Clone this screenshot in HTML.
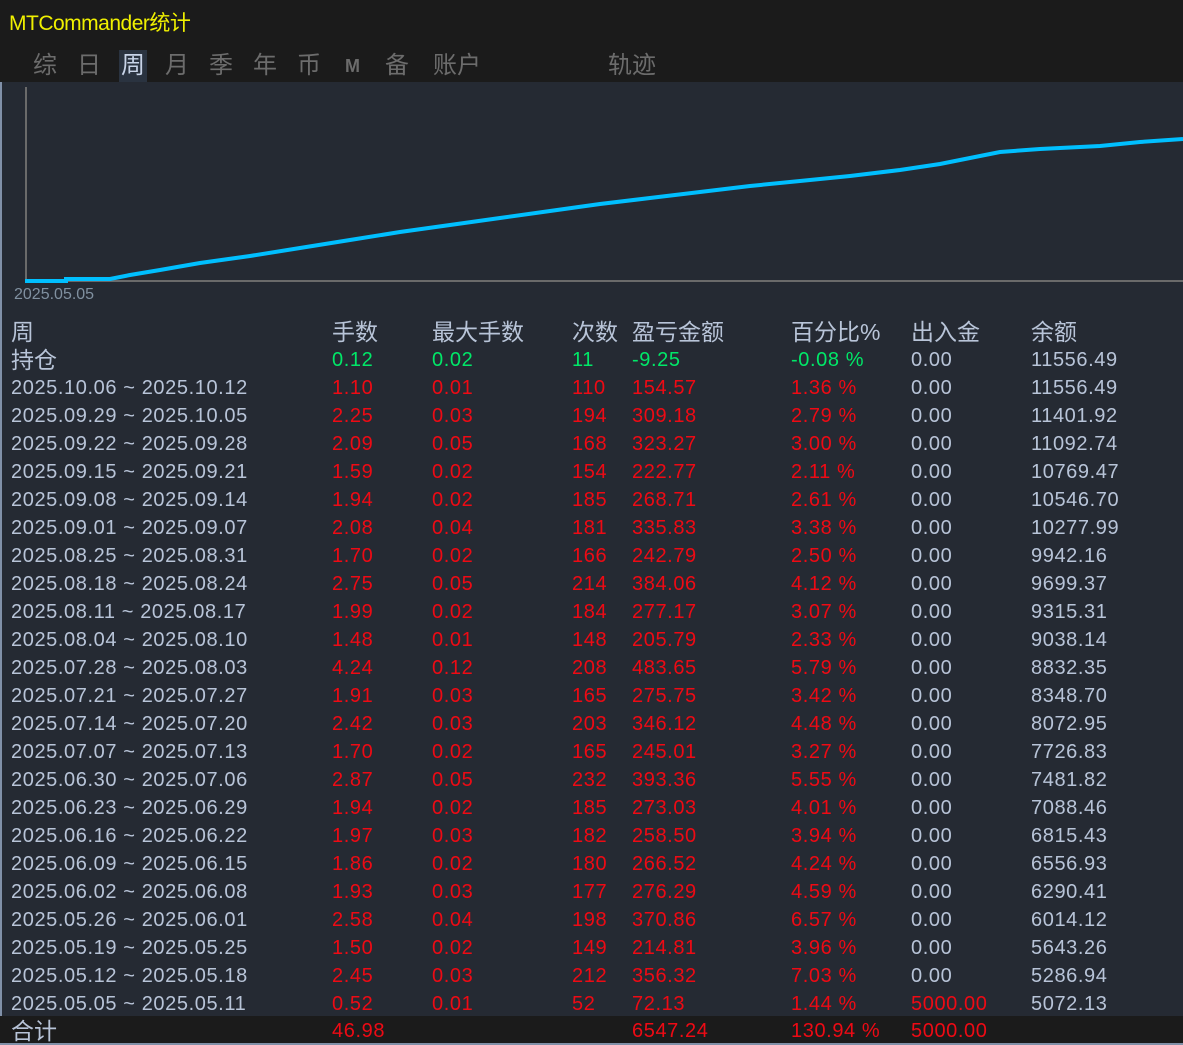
<!DOCTYPE html>
<html><head><meta charset="utf-8">
<style>
html,body{margin:0;padding:0}
body{width:1183px;height:1045px;position:relative;overflow:hidden;background:#252a33;font-family:"Liberation Sans","Noto Sans CJK SC",sans-serif;}
.top{position:absolute;left:0;top:0;width:1183px;height:82px;background:#1b1b1b}
.title{position:absolute;left:9px;top:7px;font-size:21px;color:#f0f000;letter-spacing:-0.5px}
.tab{position:absolute;top:50px;font-size:24px;color:#6c6c6c;line-height:32px}
.sel{background:#2a3340;color:#c8d4e8;padding:0 2px;margin-left:-2px}
.lb{position:absolute;left:0;top:82px;width:2px;height:963px;background:#8090a8}
.r{position:absolute;left:0;width:1183px;height:28px;font-size:20px;letter-spacing:0.6px;line-height:28px;color:#b8c4d8;white-space:nowrap}
.r span{position:absolute}
.h{font-size:23px;letter-spacing:0}
.red{color:#ee0a14}.grn{color:#00e868}
.c0{left:11px}.c1{left:332px}.c2{left:432px}.c3{left:572px}.c4{left:632px}.c5{left:791px}.c6{left:911px}.c7{left:1031px}
.tot{position:absolute;left:0;top:1016px;width:1183px;height:27px;background:#1b1b1b}
.bot{position:absolute;left:0;top:1043px;width:1183px;height:2px;background:#8090a8}
</style></head><body>
<div class="top">
<div class="title">MTCommander统计</div>
<span class="tab" style="left:33px">综</span>
<span class="tab" style="left:77px">日</span>
<span class="tab sel" style="left:121px">周</span>
<span class="tab" style="left:165px">月</span>
<span class="tab" style="left:209px">季</span>
<span class="tab" style="left:253px">年</span>
<span class="tab" style="left:297px">币</span>
<span class="tab" style="left:345px;font-size:18px;font-weight:bold">M</span>
<span class="tab" style="left:385px">备</span>
<span class="tab" style="left:433px">账户</span>
<span class="tab" style="left:608px">轨迹</span>
</div>
<div class="lb"></div>
<svg style="position:absolute;left:0;top:82px" width="1183" height="210">
<line x1="26" y1="5" x2="26" y2="200" stroke="#6a6a6a" stroke-width="2"/>
<line x1="26" y1="199" x2="1183" y2="199" stroke="#6a6a6a" stroke-width="2"/>
<polyline fill="none" stroke="#00bfff" stroke-width="4" points="25,199 66,199 66,197 110,197 130,193 160,188 200,181 250,174 300,166 350,158 400,150 450,143 500,136 550,129 600,122 650,116 700,110 750,104 800,99 850,94 900,88 940,82 980,74 1000,70 1040,67 1100,64 1140,60 1183,57"/>
</svg>
<div style="position:absolute;left:14px;top:286px;font-size:16px;color:#8090a0">2025.05.05</div>

<div class="r h" style="top:318px"><span class="c0">周</span><span class="c1">手数</span><span class="c2">最大手数</span><span class="c3">次数</span><span class="c4">盈亏金额</span><span class="c5">百分比%</span><span class="c6">出入金</span><span class="c7">余额</span></div>
<div class="r" style="top:346px"><span class="c0 h">持仓</span><span class="c1 grn">0.12</span><span class="c2 grn">0.02</span><span class="c3 grn">11</span><span class="c4 grn">-9.25</span><span class="c5 grn">-0.08 %</span><span class="c6">0.00</span><span class="c7">11556.49</span></div>
<div class="r" style="top:374px"><span class="c0">2025.10.06 ~ 2025.10.12</span><span class="c1 red">1.10</span><span class="c2 red">0.01</span><span class="c3 red">110</span><span class="c4 red">154.57</span><span class="c5 red">1.36 %</span><span class="c6">0.00</span><span class="c7">11556.49</span></div>
<div class="r" style="top:402px"><span class="c0">2025.09.29 ~ 2025.10.05</span><span class="c1 red">2.25</span><span class="c2 red">0.03</span><span class="c3 red">194</span><span class="c4 red">309.18</span><span class="c5 red">2.79 %</span><span class="c6">0.00</span><span class="c7">11401.92</span></div>
<div class="r" style="top:430px"><span class="c0">2025.09.22 ~ 2025.09.28</span><span class="c1 red">2.09</span><span class="c2 red">0.05</span><span class="c3 red">168</span><span class="c4 red">323.27</span><span class="c5 red">3.00 %</span><span class="c6">0.00</span><span class="c7">11092.74</span></div>
<div class="r" style="top:458px"><span class="c0">2025.09.15 ~ 2025.09.21</span><span class="c1 red">1.59</span><span class="c2 red">0.02</span><span class="c3 red">154</span><span class="c4 red">222.77</span><span class="c5 red">2.11 %</span><span class="c6">0.00</span><span class="c7">10769.47</span></div>
<div class="r" style="top:486px"><span class="c0">2025.09.08 ~ 2025.09.14</span><span class="c1 red">1.94</span><span class="c2 red">0.02</span><span class="c3 red">185</span><span class="c4 red">268.71</span><span class="c5 red">2.61 %</span><span class="c6">0.00</span><span class="c7">10546.70</span></div>
<div class="r" style="top:514px"><span class="c0">2025.09.01 ~ 2025.09.07</span><span class="c1 red">2.08</span><span class="c2 red">0.04</span><span class="c3 red">181</span><span class="c4 red">335.83</span><span class="c5 red">3.38 %</span><span class="c6">0.00</span><span class="c7">10277.99</span></div>
<div class="r" style="top:542px"><span class="c0">2025.08.25 ~ 2025.08.31</span><span class="c1 red">1.70</span><span class="c2 red">0.02</span><span class="c3 red">166</span><span class="c4 red">242.79</span><span class="c5 red">2.50 %</span><span class="c6">0.00</span><span class="c7">9942.16</span></div>
<div class="r" style="top:570px"><span class="c0">2025.08.18 ~ 2025.08.24</span><span class="c1 red">2.75</span><span class="c2 red">0.05</span><span class="c3 red">214</span><span class="c4 red">384.06</span><span class="c5 red">4.12 %</span><span class="c6">0.00</span><span class="c7">9699.37</span></div>
<div class="r" style="top:598px"><span class="c0">2025.08.11 ~ 2025.08.17</span><span class="c1 red">1.99</span><span class="c2 red">0.02</span><span class="c3 red">184</span><span class="c4 red">277.17</span><span class="c5 red">3.07 %</span><span class="c6">0.00</span><span class="c7">9315.31</span></div>
<div class="r" style="top:626px"><span class="c0">2025.08.04 ~ 2025.08.10</span><span class="c1 red">1.48</span><span class="c2 red">0.01</span><span class="c3 red">148</span><span class="c4 red">205.79</span><span class="c5 red">2.33 %</span><span class="c6">0.00</span><span class="c7">9038.14</span></div>
<div class="r" style="top:654px"><span class="c0">2025.07.28 ~ 2025.08.03</span><span class="c1 red">4.24</span><span class="c2 red">0.12</span><span class="c3 red">208</span><span class="c4 red">483.65</span><span class="c5 red">5.79 %</span><span class="c6">0.00</span><span class="c7">8832.35</span></div>
<div class="r" style="top:682px"><span class="c0">2025.07.21 ~ 2025.07.27</span><span class="c1 red">1.91</span><span class="c2 red">0.03</span><span class="c3 red">165</span><span class="c4 red">275.75</span><span class="c5 red">3.42 %</span><span class="c6">0.00</span><span class="c7">8348.70</span></div>
<div class="r" style="top:710px"><span class="c0">2025.07.14 ~ 2025.07.20</span><span class="c1 red">2.42</span><span class="c2 red">0.03</span><span class="c3 red">203</span><span class="c4 red">346.12</span><span class="c5 red">4.48 %</span><span class="c6">0.00</span><span class="c7">8072.95</span></div>
<div class="r" style="top:738px"><span class="c0">2025.07.07 ~ 2025.07.13</span><span class="c1 red">1.70</span><span class="c2 red">0.02</span><span class="c3 red">165</span><span class="c4 red">245.01</span><span class="c5 red">3.27 %</span><span class="c6">0.00</span><span class="c7">7726.83</span></div>
<div class="r" style="top:766px"><span class="c0">2025.06.30 ~ 2025.07.06</span><span class="c1 red">2.87</span><span class="c2 red">0.05</span><span class="c3 red">232</span><span class="c4 red">393.36</span><span class="c5 red">5.55 %</span><span class="c6">0.00</span><span class="c7">7481.82</span></div>
<div class="r" style="top:794px"><span class="c0">2025.06.23 ~ 2025.06.29</span><span class="c1 red">1.94</span><span class="c2 red">0.02</span><span class="c3 red">185</span><span class="c4 red">273.03</span><span class="c5 red">4.01 %</span><span class="c6">0.00</span><span class="c7">7088.46</span></div>
<div class="r" style="top:822px"><span class="c0">2025.06.16 ~ 2025.06.22</span><span class="c1 red">1.97</span><span class="c2 red">0.03</span><span class="c3 red">182</span><span class="c4 red">258.50</span><span class="c5 red">3.94 %</span><span class="c6">0.00</span><span class="c7">6815.43</span></div>
<div class="r" style="top:850px"><span class="c0">2025.06.09 ~ 2025.06.15</span><span class="c1 red">1.86</span><span class="c2 red">0.02</span><span class="c3 red">180</span><span class="c4 red">266.52</span><span class="c5 red">4.24 %</span><span class="c6">0.00</span><span class="c7">6556.93</span></div>
<div class="r" style="top:878px"><span class="c0">2025.06.02 ~ 2025.06.08</span><span class="c1 red">1.93</span><span class="c2 red">0.03</span><span class="c3 red">177</span><span class="c4 red">276.29</span><span class="c5 red">4.59 %</span><span class="c6">0.00</span><span class="c7">6290.41</span></div>
<div class="r" style="top:906px"><span class="c0">2025.05.26 ~ 2025.06.01</span><span class="c1 red">2.58</span><span class="c2 red">0.04</span><span class="c3 red">198</span><span class="c4 red">370.86</span><span class="c5 red">6.57 %</span><span class="c6">0.00</span><span class="c7">6014.12</span></div>
<div class="r" style="top:934px"><span class="c0">2025.05.19 ~ 2025.05.25</span><span class="c1 red">1.50</span><span class="c2 red">0.02</span><span class="c3 red">149</span><span class="c4 red">214.81</span><span class="c5 red">3.96 %</span><span class="c6">0.00</span><span class="c7">5643.26</span></div>
<div class="r" style="top:962px"><span class="c0">2025.05.12 ~ 2025.05.18</span><span class="c1 red">2.45</span><span class="c2 red">0.03</span><span class="c3 red">212</span><span class="c4 red">356.32</span><span class="c5 red">7.03 %</span><span class="c6">0.00</span><span class="c7">5286.94</span></div>
<div class="r" style="top:990px"><span class="c0">2025.05.05 ~ 2025.05.11</span><span class="c1 red">0.52</span><span class="c2 red">0.01</span><span class="c3 red">52</span><span class="c4 red">72.13</span><span class="c5 red">1.44 %</span><span class="c6 red">5000.00</span><span class="c7">5072.13</span></div>
<div class="tot"></div>
<div class="r" style="top:1017px"><span class="c0 h">合计</span><span class="c1 red">46.98</span><span class="c4 red">6547.24</span><span class="c5 red">130.94 %</span><span class="c6 red">5000.00</span></div>
<div class="bot"></div>
</body></html>
